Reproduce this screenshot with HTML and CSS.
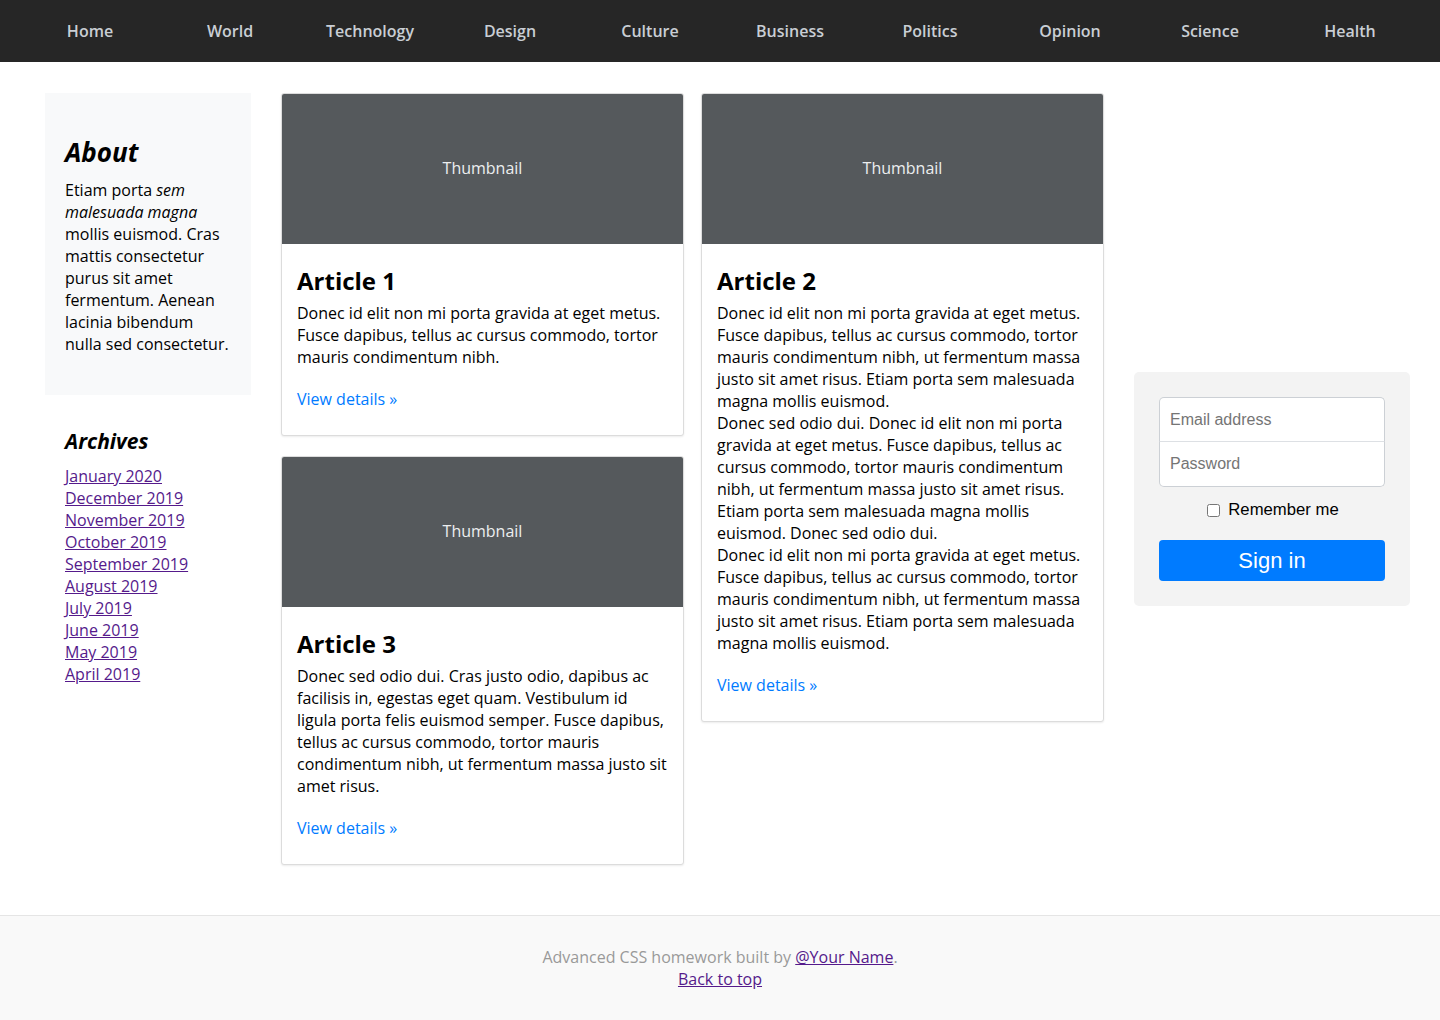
FILE: index.html
```html
<!DOCTYPE html>
<html lang="en">
<head>
<meta charset="utf-8">
<title>Advanced CSS</title>
<link rel="stylesheet" href="styles.css">
</head>
<body>
<nav class="topnav">
  <a href="#">Home</a>
  <a href="#">World</a>
  <a href="#">Technology</a>
  <a href="#">Design</a>
  <a href="#">Culture</a>
  <a href="#">Business</a>
  <a href="#">Politics</a>
  <a href="#">Opinion</a>
  <a href="#">Science</a>
  <a href="#">Health</a>
</nav>
<main class="layout">
  <aside class="sidebar">
    <section class="about">
      <h2 class="about-title">About</h2>
      <p class="about-text">Etiam porta <em>sem malesuada magna</em> mollis euismod. Cras mattis consectetur purus sit amet fermentum. Aenean lacinia bibendum nulla sed consectetur.</p>
    </section>
    <section class="archives">
      <h3 class="archives-title">Archives</h3>
      <ul class="archive-list">
        <li><a href="#">January 2020</a></li>
        <li><a href="#">December 2019</a></li>
        <li><a href="#">November 2019</a></li>
        <li><a href="#">October 2019</a></li>
        <li><a href="#">September 2019</a></li>
        <li><a href="#">August 2019</a></li>
        <li><a href="#">July 2019</a></li>
        <li><a href="#">June 2019</a></li>
        <li><a href="#">May 2019</a></li>
        <li><a href="#">April 2019</a></li>
      </ul>
    </section>
  </aside>
  <div class="articles">
    <div class="article-col">
      <article class="card">
        <div class="thumb">Thumbnail</div>
        <div class="card-body">
          <h2 class="card-title">Article 1</h2>
          <p class="card-text">Donec id elit non mi porta gravida at eget metus. Fusce dapibus, tellus ac cursus commodo, tortor mauris condimentum nibh.</p>
          <a class="details" href="#">View details »</a>
        </div>
      </article>
      <article class="card">
        <div class="thumb">Thumbnail</div>
        <div class="card-body">
          <h2 class="card-title">Article 3</h2>
          <p class="card-text">Donec sed odio dui. Cras justo odio, dapibus ac facilisis in, egestas eget quam. Vestibulum id ligula porta felis euismod semper. Fusce dapibus, tellus ac cursus commodo, tortor mauris condimentum nibh, ut fermentum massa justo sit amet risus.</p>
          <a class="details" href="#">View details »</a>
        </div>
      </article>
    </div>
    <div class="article-col">
      <article class="card">
        <div class="thumb">Thumbnail</div>
        <div class="card-body">
          <h2 class="card-title">Article 2</h2>
          <p class="card-text">Donec id elit non mi porta gravida at eget metus. Fusce dapibus, tellus ac cursus commodo, tortor mauris condimentum nibh, ut fermentum massa justo sit amet risus. Etiam porta sem malesuada magna mollis euismod.<br>Donec sed odio dui. Donec id elit non mi porta gravida at eget metus. Fusce dapibus, tellus ac cursus commodo, tortor mauris condimentum nibh, ut fermentum massa justo sit amet risus. Etiam porta sem malesuada magna mollis euismod. Donec sed odio dui.<br>Donec id elit non mi porta gravida at eget metus. Fusce dapibus, tellus ac cursus commodo, tortor mauris condimentum nibh, ut fermentum massa justo sit amet risus. Etiam porta sem malesuada magna mollis euismod.</p>
          <a class="details" href="#">View details »</a>
        </div>
      </article>
    </div>
  </div>
  <div class="signin-wrap">
    <form class="signin">
      <div class="fields">
        <input class="field" type="email" placeholder="Email address">
        <input class="field" type="password" placeholder="Password">
      </div>
      <label class="remember"><input type="checkbox" class="check"> Remember me</label>
      <button class="btn" type="button">Sign in</button>
    </form>
  </div>
</main>
<footer class="footer">
  <p class="footer-line">Advanced CSS homework built by <a href="#">@Your Name</a>.</p>
  <p class="footer-line"><a href="#">Back to top</a></p>
</footer>
</body>
</html>
```

FILE: styles.css
```css
* { box-sizing: border-box; }

html, body {
  margin: 0;
  padding: 0;
}

body {
  font-family: "Open Sans", "DejaVu Sans", sans-serif;
  font-size: 16px;
  line-height: 22px;
  color: #000;
  background: #fff;
}

a { color: #551a8b; }

.topnav {
  display: flex;
  height: 62px;
  padding: 0 20px;
  background: #262626;
  align-items: center;
}

.topnav a {
  flex: 1;
  text-align: center;
  color: #c9ced4;
  font-weight: 600;
  font-size: 16px;
  text-decoration: none;
}

.layout {
  display: flex;
  align-items: flex-start;
  padding: 31px 30px 0 45px;
}

.sidebar {
  width: 206px;
  flex: none;
}

.about {
  background: #f8f9fa;
  padding: 44px 20px 40px;
}

.about-title {
  margin: 0 0 11px;
  font-size: 26px;
  line-height: 31px;
  font-weight: 700;
  font-style: italic;
}

.about-text {
  margin: 0;
}

.archives {
  padding: 34px 20px 0;
}

.archives-title {
  margin: 0 0 11px;
  font-size: 21px;
  line-height: 25px;
  font-weight: 700;
  font-style: italic;
}

.archive-list {
  list-style: none;
  margin: 0;
  padding: 0;
}

.articles {
  display: flex;
  gap: 17px;
  margin-left: 30px;
}

.article-col {
  width: 403px;
  display: flex;
  flex-direction: column;
  gap: 20px;
}

.card {
  border: 1px solid #dcdcdc;
  border-radius: 3px;
  box-shadow: 0 1px 2px rgba(0,0,0,0.08);
  overflow: hidden;
  background: #fff;
}

.thumb {
  height: 150px;
  background: #55595c;
  color: #eceeef;
  display: flex;
  align-items: center;
  justify-content: center;
  font-size: 16px;
  padding-bottom: 2px;
}

.card-body {
  padding: 22px 15px 25px;
}

.card-title {
  margin: 0 0 7px;
  font-size: 24px;
  line-height: 29px;
  font-weight: 700;
}

.card-text {
  margin: 0 0 20px;
}

.details {
  color: #007bff;
  text-decoration: none;
}

.signin-wrap {
  margin-left: 30px;
  width: 276px;
  flex: none;
  padding-top: 279px;
}

.signin {
  background: #f3f3f3;
  border-radius: 5px;
  padding: 25px;
  font-family: "Liberation Sans", Arial, sans-serif;
}

.fields {
  display: flex;
  flex-direction: column;
}

.field {
  height: 45px;
  border: 1px solid #ccd0d5;
  background: #fff;
  padding: 0 10px;
  font-family: "Liberation Sans", Arial, sans-serif;
  font-size: 16px;
  color: #333;
  outline: none;
}

.field::placeholder { color: #757575; }

.field:first-child {
  border-radius: 5px 5px 0 0;
  border-bottom-color: #dde0e4;
}

.field:last-child {
  border-radius: 0 0 5px 5px;
  border-top: none;
}

.remember {
  display: flex;
  justify-content: center;
  align-items: center;
  gap: 8px;
  height: 22px;
  margin: 12px 0 19px;
  padding-left: 2px;
  font-size: 16.7px;
  color: #000;
}

.check {
  margin: 0;
  width: 13px;
  height: 13px;
}

.btn {
  display: block;
  width: 100%;
  height: 41px;
  border: none;
  border-radius: 4px;
  background: #007bff;
  color: #fff;
  font-family: "Liberation Sans", Arial, sans-serif;
  font-size: 22px;
  padding: 0;
}

.footer {
  margin-top: 50px;
  border-top: 1px solid #e5e5e5;
  background: #f9f9f9;
  padding: 30px 0 30px;
  text-align: center;
  color: #999;
}

.footer-line {
  margin: 0;
}
```
